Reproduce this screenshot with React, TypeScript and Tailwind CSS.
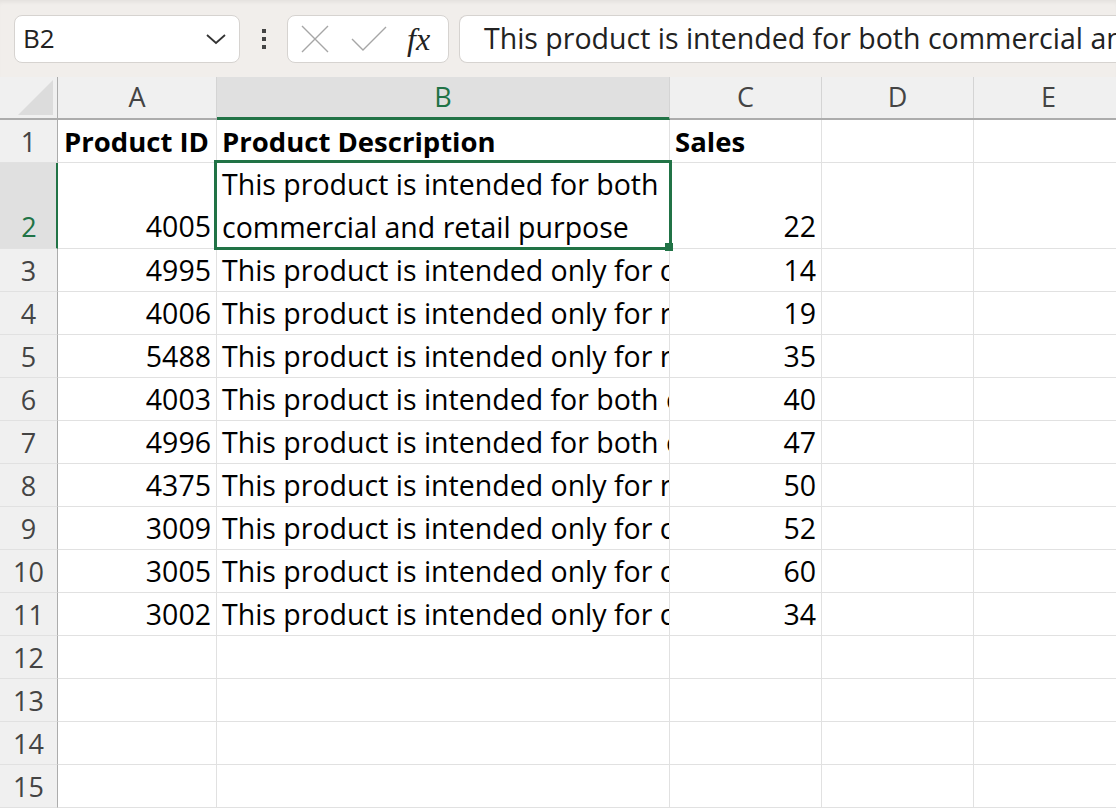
import React from "react";

type Row = { n: number; id?: string; desc?: string; sales?: string };

const FULL_BOTH = "This product is intended for both commercial and retail purpose";
const ONLY_C = "This product is intended only for commercial purpose";
const ONLY_R = "This product is intended only for retail purpose";

const rows: Row[] = [
  { n: 3, id: "4995", desc: ONLY_C, sales: "14" },
  { n: 4, id: "4006", desc: ONLY_R, sales: "19" },
  { n: 5, id: "5488", desc: ONLY_R, sales: "35" },
  { n: 6, id: "4003", desc: FULL_BOTH, sales: "40" },
  { n: 7, id: "4996", desc: FULL_BOTH, sales: "47" },
  { n: 8, id: "4375", desc: ONLY_R, sales: "50" },
  { n: 9, id: "3009", desc: ONLY_C, sales: "52" },
  { n: 10, id: "3005", desc: ONLY_C, sales: "60" },
  { n: 11, id: "3002", desc: ONLY_C, sales: "34" },
  { n: 12 },
  { n: 13 },
  { n: 14 },
  { n: 15 },
];

const cell = "shrink-0 border-r border-b border-[#e1e1e1] overflow-hidden whitespace-nowrap";
const rowHead =
  "flex w-[58px] shrink-0 items-center justify-center border-r border-b border-r-[#acacac] border-b-[#e1e1e1] bg-[#f0f0f0] text-[27px] text-[#444]";

const FormulaBar = () => (
  <div className="flex h-[77px] items-center bg-[#f1eeeb] pl-[14px] shadow-[inset_0_4px_4px_-2px_rgba(0,0,0,0.06)]">
    {/* Name box */}
    <div className="flex h-[48px] w-[226px] shrink-0 items-center justify-between rounded-[8px] border border-[#d6d3d0] bg-white pl-[8px] pr-[12px]">
      <span className="text-[26px] text-[#222]">B2</span>
      <svg width="22" height="14" viewBox="0 0 22 14">
        <path d="M2 3 L11 11 L20 3" fill="none" stroke="#333" strokeWidth="1.8" />
      </svg>
    </div>
    {/* more dots */}
    <div className="flex w-[47px] shrink-0 flex-col items-center gap-[4px]">
      <div className="h-[4px] w-[4px] bg-[#444]" />
      <div className="h-[4px] w-[4px] bg-[#444]" />
      <div className="h-[4px] w-[4px] bg-[#444]" />
    </div>
    {/* cancel / enter / fx */}
    <div className="flex h-[48px] w-[162px] shrink-0 items-center rounded-[8px] border border-[#d6d3d0] bg-white pl-[13px]">
      <svg width="28" height="28" viewBox="0 0 28 28">
        <path d="M1 1 L27 27 M27 1 L1 27" stroke="#a6a6a6" strokeWidth="1.4" />
      </svg>
      <svg className="ml-[22px]" width="36" height="26" viewBox="0 0 36 26">
        <path d="M1 13 L12 24 L35 1" fill="none" stroke="#a6a6a6" strokeWidth="1.4" />
      </svg>
      <span className="ml-[20px] font-['Liberation_Serif',serif] text-[32px] italic leading-none text-[#222]">
        fx
      </span>
    </div>
    {/* formula input */}
    <div className="ml-[10px] flex h-[48px] min-w-0 flex-1 items-center overflow-hidden whitespace-nowrap rounded-l-[8px] border border-r-0 border-[#d6d3d0] bg-white pl-[24px] text-[28.5px] text-[#222]">
      {FULL_BOTH}
    </div>
  </div>
);

const colHead = "flex shrink-0 items-center justify-center border-r border-[#d4d4d4] text-[27px] text-[#444]";

const App = () => {
  return (
    <div className="h-[812px] w-[1116px] overflow-hidden bg-white font-['Open_Sans',sans-serif] text-black">
      <FormulaBar />
      <div className="relative">
        {/* column headers */}
        <div className="flex h-[43px] border-b-2 border-[#acacac] bg-[#f0f0f0]">
          <div className="relative w-[58px] shrink-0 border-r border-[#acacac]">
            <svg className="absolute right-[4px] bottom-[3px]" width="35" height="35" viewBox="0 0 35 35">
              <path d="M35 0 L35 35 L0 35 Z" fill="#dcdcdc" />
            </svg>
          </div>
          <div className={`${colHead} w-[159px]`}>A</div>
          <div className={`${colHead} -mb-[2px] w-[453px] border-b-[3px] border-b-[#217346] bg-[#e0e0e0] text-[#217346]`}>
            B
          </div>
          <div className={`${colHead} w-[152px]`}>C</div>
          <div className={`${colHead} w-[152px]`}>D</div>
          <div className={`${colHead} w-[150px]`}>E</div>
        </div>

        {/* row 1 */}
        <div className="flex h-[43px] text-[27.5px] leading-[43px]">
          <div className={rowHead}>1</div>
          <div className={`${cell} w-[159px] pl-[6px] font-bold`}>Product ID</div>
          <div className={`${cell} w-[453px] pl-[5px] font-bold`}>Product Description</div>
          <div className={`${cell} w-[152px] pl-[5px] font-bold`}>Sales</div>
          <div className={`${cell} w-[152px]`} />
          <div className={`${cell} w-[150px]`} />
        </div>

        {/* row 2 (wrapped text) */}
        <div className="flex h-[86px] text-[28.5px] leading-[43px]">
          <div className="flex w-[58px] shrink-0 items-end justify-center border-r-2 border-b border-r-[#217346] border-b-[#e1e1e1] bg-[#e0e0e0] pl-[2px] text-[27px] text-[#217346]">
            2
          </div>
          <div className={`${cell} flex w-[159px] items-end justify-end pr-[5px]`}>4005</div>
          <div className={`${cell} w-[453px] whitespace-normal pl-[5px]`}>
            This product is intended for both
            <br />
            commercial and retail purpose
          </div>
          <div className={`${cell} flex w-[152px] items-end justify-end pr-[5px]`}>22</div>
          <div className={`${cell} w-[152px]`} />
          <div className={`${cell} w-[150px]`} />
        </div>

        {rows.map((r) => (
          <div key={r.n} className="flex h-[43px] text-[28.5px] leading-[43px]">
            <div className={rowHead}>{r.n}</div>
            <div className={`${cell} w-[159px] pr-[5px] text-right`}>{r.id}</div>
            <div className={`${cell} w-[453px] pl-[5px]`}>{r.desc}</div>
            <div className={`${cell} w-[152px] pr-[5px] text-right`}>{r.sales}</div>
            <div className={`${cell} w-[152px]`} />
            <div className={`${cell} w-[150px]`} />
          </div>
        ))}

        {/* active cell selection on B2 */}
        <div className="pointer-events-none absolute top-[83px] left-[214px] h-[90px] w-[458px] border-[3px] border-[#217346]">
          <div className="absolute -right-[4px] -bottom-[4px] h-[8px] w-[8px] bg-[#217346]" />
        </div>
      </div>
    </div>
  );
};

export default App;
